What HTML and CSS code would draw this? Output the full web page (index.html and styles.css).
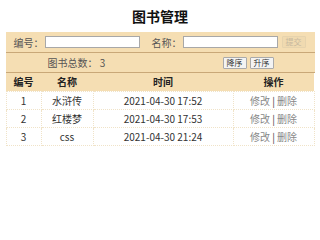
FILE: index.html
```html
<!DOCTYPE html>
<html>

<head>
  <meta charset="UTF-8">
  <title>图书管理</title>
  <link rel="stylesheet" href="styles.css">
</head>

<body>
  <div class="container">
    <h1 class="title">图书管理</h1>
    <div class="toolbar">
      <div class="row">
        <label>编号：</label>
        <input type="text" class="ipt">
        <label class="gap">名称：</label>
        <input type="text" class="ipt">
        <button class="submit" disabled>提交</button>
      </div>
      <div class="row row2">
        <span class="total">图书总数： 3</span>
        <span class="sort">
          <button>降序</button>
          <button>升序</button>
        </span>
      </div>
    </div>
    <table class="list">
      <thead>
        <tr>
          <th class="c1">编号</th>
          <th class="c2">名称</th>
          <th class="c3">时间</th>
          <th class="c4">操作</th>
        </tr>
      </thead>
      <tbody>
        <tr>
          <td>1</td>
          <td>水浒传</td>
          <td>2021-04-30 17:52</td>
          <td class="op"><a href="javascript:;">修改</a> | <a href="javascript:;">删除</a></td>
        </tr>
        <tr>
          <td>2</td>
          <td>红楼梦</td>
          <td>2021-04-30 17:53</td>
          <td class="op"><a href="javascript:;">修改</a> | <a href="javascript:;">删除</a></td>
        </tr>
        <tr>
          <td>3</td>
          <td>css</td>
          <td>2021-04-30 21:24</td>
          <td class="op"><a href="javascript:;">修改</a> | <a href="javascript:;">删除</a></td>
        </tr>
      </tbody>
    </table>
  </div>
</body>

</html>
```

FILE: styles.css
```css
* {
  margin: 0;
  padding: 0;
  box-sizing: border-box;
}

body {
  font-family: "Noto Sans CJK SC", "Noto Sans", sans-serif;
  font-size: 10px;
  color: #333;
  background: #fff;
}

a {
  text-decoration: none;
  color: #888;
}

.container {
  width: 309px;
  margin: 0 auto;
}

.title {
  height: 32px;
  line-height: 32px;
  text-align: center;
  font-size: 14px;
  font-weight: bold;
  color: #111;
}

.toolbar {
  background-color: #f5deb3;
  border-bottom: 1px solid #c9a878;
}

.toolbar .row {
  display: flex;
  align-items: center;
  height: 20px;
  padding: 0 8px;
  color: #555;
}

.toolbar .row2 {
  height: 20px;
  border-top: 1px solid #c9a878;
  padding-left: 42px;
}

.toolbar .ipt {
  width: 95px;
  height: 12px;
  border: 1px solid #a8a8a8;
  background: #fff;
  outline: none;
}

.toolbar .gap {
  margin-left: 12px;
}

.toolbar label {
  font-size: 10px;
  width: 31px;
}

.toolbar button {
  height: 12px;
  padding: 0 3px;
  font-family: inherit;
  font-size: 8px;
  line-height: 10px;
  color: #333;
  background: #f3f3f3;
  border: 1px solid #aaa;
  border-radius: 1px;
}

.toolbar .submit {
  margin-left: 4px;
  width: 24px;
  color: #c6b89e;
  background: #f0dab0;
  border-color: #e6d3ad;
}

.toolbar .total {
  flex: 1;
}

.toolbar .sort {
  display: flex;
  gap: 3px;
  margin-right: 33px;
  margin-top: 1px;
}

.list {
  width: 100%;
  border-collapse: collapse;
  text-align: center;
  font-size: 10px;
}

.list th {
  height: 18px;
  background-color: #f5deb3;
  font-weight: bold;
  color: #222;
}

.list td {
  height: 18px;
  border: 1px dotted #f0e3c8;
  color: #333;
}

.list .c1 {
  width: 35px;
}

.list .c2 {
  width: 52px;
}

.list .c3 {
  width: 140px;
}

.list .op {
  color: #444;
}
```
